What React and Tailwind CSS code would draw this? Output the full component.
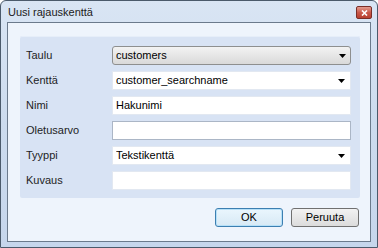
import { useState } from 'react';

// Windows 7 (basic theme) dialog: "Uusi rajauskenttä" — add a filter field.
const rows = [
  { label: 'Taulu', value: 'customers', kind: 'combo' },
  { label: 'Kenttä', value: 'customer_searchname', kind: 'drop' },
  { label: 'Nimi', value: 'Hakunimi', kind: 'text' },
  { label: 'Oletusarvo', value: '', kind: 'focus' },
  { label: 'Tyyppi', value: 'Tekstikenttä', kind: 'drop' },
  { label: 'Kuvaus', value: '', kind: 'text' },
];

function Arrow() {
  return (
    <svg width="7" height="4" viewBox="0 0 7 4" className="shrink-0">
      <path d="M0 0h7L3.5 4z" fill="#000" />
    </svg>
  );
}

function Field({ value, kind }) {
  if (kind === 'combo') {
    return (
      <div className="flex h-[19px] flex-1 items-center rounded-[3px] border border-[#8e8f8f] bg-gradient-to-b from-[#f3f3f3] to-[#d9d9d9] pr-[4px] pl-[3px]">
        <span className="flex-1 truncate">{value}</span>
        <Arrow />
      </div>
    );
  }
  const border = kind === 'focus' ? 'border-[#abb6c6]' : 'border-[#e2e8f1]';
  return (
    <div className={`flex h-[19px] flex-1 items-center border bg-white pr-[5px] pl-[3px] ${border}`}>
      <span className="flex-1 truncate">{value}</span>
      {kind === 'drop' && <Arrow />}
    </div>
  );
}

export default function App() {
  const [rowsState] = useState(rows);

  return (
    <div
      className="flex h-[248px] w-[378px] flex-col rounded-t-[6px] border border-[#4b5a6b] bg-gradient-to-b from-[#d9e5f4] via-[#ccdbee] to-[#c6d6ec] text-[11px] text-black"
      style={{ fontFamily: '"Liberation Sans", Arial, sans-serif' }}
    >
      <div className="flex h-[21px] shrink-0 items-start justify-between pt-[5px] pr-[5px] pl-[7px]">
        <span className="text-[11px] leading-[13px] text-[#1b1b1b]">Uusi rajauskenttä</span>
        <button
          type="button"
          aria-label="Sulje"
          className="flex h-[13px] w-[16px] items-center justify-center rounded-[2px] border border-[#7a2e28] bg-gradient-to-b from-[#e29b8f] via-[#c9584a] to-[#b8402f]"
        >
          <svg width="7" height="6" viewBox="0 0 7 6">
            <path d="M1 0.5l5 5M6 0.5l-5 5" stroke="#fff" strokeWidth="1.6" />
          </svg>
        </button>
      </div>

      <div className="mx-[6px] mb-[5px] flex flex-1 flex-col border border-[#6b7a8c] bg-[#eef4fc]">
        <div className="mt-[13px] mr-[10px] ml-[12px] flex flex-col gap-[6px] rounded-[2px] bg-[#d8e3f4] pt-[10px] pr-[9px] pb-[8px] pl-[6px] shadow-[inset_0_1px_0_#e6eef9]">
          {rowsState.map((r) => (
            <div key={r.label} className="flex items-center">
              <span className="w-[86px] shrink-0 text-[#1e1e1e]">{r.label}</span>
              <Field value={r.value} kind={r.kind} />
            </div>
          ))}
        </div>

        <div className="mt-[10px] flex justify-end gap-[8px] pr-[11px]">
          <button
            type="button"
            className="h-[19px] w-[68px] rounded-[3px] border border-[#3c7fb1] bg-gradient-to-b from-[#eaf6fd] to-[#d7e9f5] shadow-[inset_0_0_0_1px_#b6e0f8]"
          >
            OK
          </button>
          <button
            type="button"
            className="h-[19px] w-[68px] rounded-[3px] border border-[#707070] bg-gradient-to-b from-[#f2f2f2] to-[#dcdcdc]"
          >
            Peruuta
          </button>
        </div>
      </div>
    </div>
  );
}
